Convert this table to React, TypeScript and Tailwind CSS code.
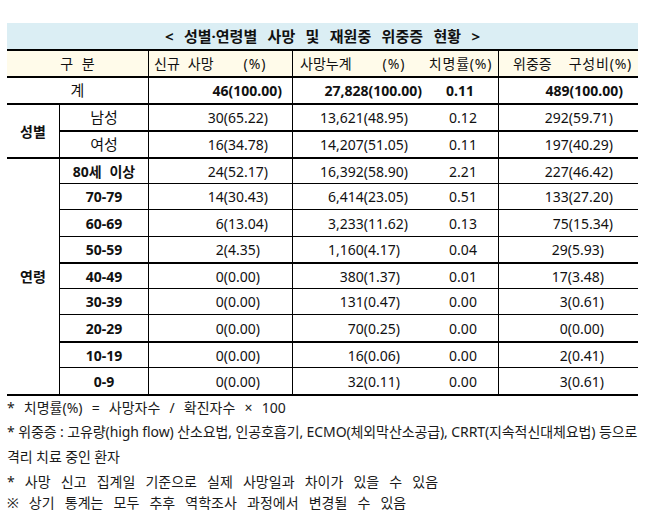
import React from "react";

type AgeRow = { label: string; a: string; b: string; c: string; d: string; thick: boolean };

const genders = [
  { label: "남성", a: "30(65.22)", b: "13,621(48.95)", c: "0.12", d: "292(59.71)" },
  { label: "여성", a: "16(34.78)", b: "14,207(51.05)", c: "0.11", d: "197(40.29)" },
];

const ages: AgeRow[] = [
  { label: "80세 이상", a: "24(52.17)", b: "16,392(58.90)", c: "2.21", d: "227(46.42)", thick: false },
  { label: "70-79", a: "14(30.43)", b: "6,414(23.05)", c: "0.51", d: "133(27.20)", thick: false },
  { label: "60-69", a: "6(13.04)", b: "3,233(11.62)", c: "0.13", d: "75(15.34)", thick: false },
  { label: "50-59", a: "2(4.35)", b: "1,160(4.17)", c: "0.04", d: "29(5.93)", thick: true },
  { label: "40-49", a: "0(0.00)", b: "380(1.37)", c: "0.01", d: "17(3.48)", thick: false },
  { label: "30-39", a: "0(0.00)", b: "131(0.47)", c: "0.00", d: "3(0.61)", thick: false },
  { label: "20-29", a: "0(0.00)", b: "70(0.25)", c: "0.00", d: "0(0.00)", thick: true },
  { label: "10-19", a: "0(0.00)", b: "16(0.06)", c: "0.00", d: "2(0.41)", thick: false },
  { label: "0-9", a: "0(0.00)", b: "32(0.11)", c: "0.00", d: "3(0.61)", thick: true },
];

const two = (s: string) => /\(\d\d\./.test(s);

function DataCells({ a, b, c, d, thick }: { a: string; b: string; c: string; d: string; thick: boolean }) {
  const bb = thick ? "border-b-2 border-black" : "border-b border-black";
  return (
    <>
      <div className={`${bb} border-r flex items-center justify-end ${two(a) ? "pr-[24px]" : "pr-[32px]"}`}>{a}</div>
      <div className={`${bb} flex items-center justify-end ${two(b) ? "pr-[25px]" : "pr-[33px]"}`}>{b}</div>
      <div className={`${bb} border-r flex items-center justify-center pr-[5px]`}>{c}</div>
      <div className={`${bb} flex items-center justify-end ${two(d) ? "pr-[25px]" : "pr-[34px]"}`}>{d}</div>
    </>
  );
}

export default function App() {
  return (
    <div className="w-[655px] h-[515px] bg-white text-[#111] font-['Noto_Sans','Noto_Sans_CJK_KR',sans-serif] text-[14px] overflow-hidden">
      <div className="pt-[23px] pl-[7px]">
        <div className="grid w-[631px] grid-cols-[53px_89px_144px_140px_66px_139px] grid-rows-[28px_27px_27px_27px_27px_25px_26px_27px_27px_25px_26px_28px_25px_28px] whitespace-nowrap">
          {/* title */}
          <div className="col-span-6 bg-[#dbeef4] border-b-2 border-black flex items-center justify-center font-bold text-[15px] [word-spacing:6.5px]">
            &lt; 성별·연령별 사망 및 재원중 위중증 현황 &gt;
          </div>
          {/* header */}
          <div className="col-span-2 bg-[#fffbea] border-b-2 border-r border-black flex items-center justify-center [word-spacing:5px]">구 분</div>
          <div className="bg-[#fffbea] border-b-2 border-r border-black flex items-center pl-[5px]">
            <span>신규</span>
            <span className="ml-[8px]">사망</span>
            <span className="ml-[30px] tracking-[1px]">(%)</span>
          </div>
          <div className="bg-[#fffbea] border-b-2 border-black flex items-center pl-[7px]">
            <span>사망누계</span>
            <span className="ml-[31px] tracking-[1px]">(%)</span>
          </div>
          <div className="bg-[#fffbea] border-b-2 border-r border-black flex items-center justify-center pr-[10px] tracking-[0.8px]">치명률(%)</div>
          <div className="bg-[#fffbea] border-b-2 border-black flex items-center pl-[14px]">
            <span>위중증</span>
            <span className="ml-[17px] tracking-[0.8px]">구성비(%)</span>
          </div>
          {/* total */}
          <div className="col-span-2 border-b-2 border-r border-black flex items-center justify-center text-[15px]">계</div>
          <div className="border-b-2 border-r border-black flex items-center justify-end pr-[10px] font-bold">46(100.00)</div>
          <div className="border-b-2 border-black flex items-center justify-end pr-[11px] font-bold">27,828(100.00)</div>
          <div className="border-b-2 border-r border-black flex items-center justify-center pr-[11px] font-bold">0.11</div>
          <div className="border-b-2 border-black flex items-center justify-end pr-[15px] font-bold">489(100.00)</div>
          {/* gender */}
          <div className="row-span-2 border-b-2 border-r border-black flex items-center justify-center font-bold">성별</div>
          {genders.map((g) => (
            <React.Fragment key={g.label}>
              <div className="border-b-2 border-r border-black flex items-center justify-center text-[15px]">{g.label}</div>
              <DataCells a={g.a} b={g.b} c={g.c} d={g.d} thick={true} />
            </React.Fragment>
          ))}
          {/* ages */}
          <div className="row-span-9 border-b-2 border-r border-black flex items-center justify-center font-bold">연령</div>
          {ages.map((r) => (
            <React.Fragment key={r.label}>
              <div className={`${r.thick ? "border-b-2" : "border-b"} border-r border-black flex items-center justify-center font-bold [word-spacing:4px]`}>{r.label}</div>
              <DataCells a={r.a} b={r.b} c={r.c} d={r.d} thick={r.thick} />
            </React.Fragment>
          ))}
        </div>
        <div className="text-[14px] text-[#1a1a1a] leading-[20px] whitespace-nowrap">
          <div className="mt-[2px] [word-spacing:5.5px]">* 치명률(%) = 사망자수 / 확진자수 × 100</div>
          <div className="mt-[4px] tracking-[-0.1px]">* 위중증 : 고유량(high flow) 산소요법, 인공호흡기, ECMO(체외막산소공급), CRRT(지속적신대체요법) 등으로</div>
          <div className="mt-[5px] tracking-[-0.1px]">격리 치료 중인 환자</div>
          <div className="mt-[5px] [word-spacing:6.5px]">* 사망 신고 집계일 기준으로 실제 사망일과 차이가 있을 수 있음</div>
          <div className="mt-[1px] [word-spacing:6.5px]">※ 상기 통계는 모두 추후 역학조사 과정에서 변경될 수 있음</div>
        </div>
      </div>
    </div>
  );
}
